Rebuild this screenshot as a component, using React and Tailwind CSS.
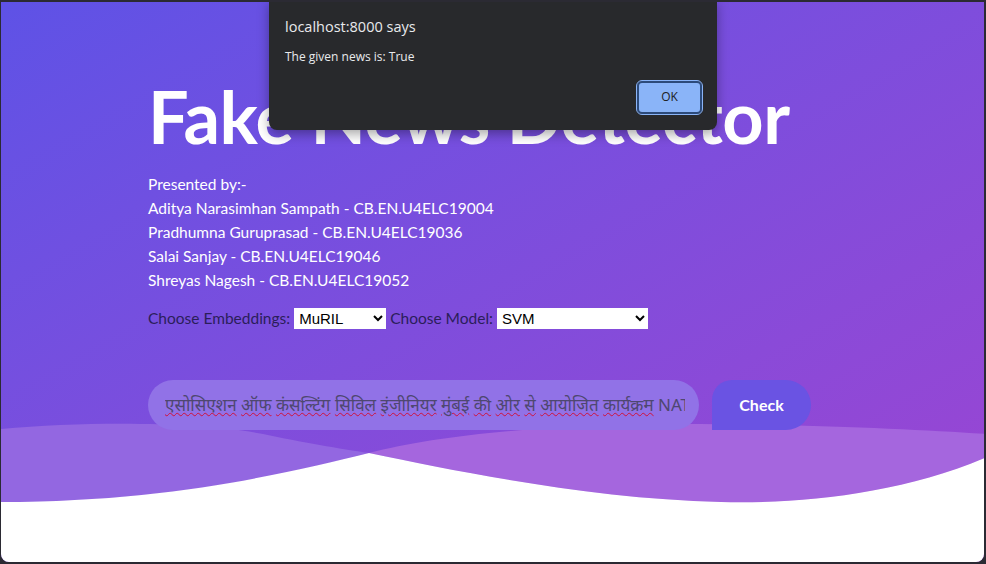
import React from "react";

const hindiWords = ["एसोसिएशन", "ऑफ", "कंसल्टिंग", "सिविल", "इंजीनियर", "मुंबई", "की", "ओर", "से", "आयोजित", "कार्यक्रम"];

function Waves() {
  return (
    <svg className="absolute inset-0" width="984" height="562" viewBox="0 0 984 562" aria-hidden="true">
      <path d="M0,427 C90,419 200,420 262,432 C300,440 340,447 368,451 C300,468 180,500 0,500 Z" fill="#9367e1" />
      <path d="M368,451 C440,432 560,421 700,422 C830,423 920,428 986,432 L986,455 C900,492 800,502 720,500 C590,497 460,470 368,451 Z" fill="#a566de" />
      <path d="M0,500 C170,500 290,470 368,451 C460,470 590,497 720,500 C800,502 900,492 986,455 L986,564 L0,564 Z" fill="#ffffff" />
    </svg>
  );
}

export default function App() {
  const people = [
    "Aditya Narasimhan Sampath - CB.EN.U4ELC19004",
    "Pradhumna Guruprasad - CB.EN.U4ELC19036",
    "Salai Sanjay - CB.EN.U4ELC19046",
    "Shreyas Nagesh - CB.EN.U4ELC19052",
  ];
  return (
    <div className="w-[986px] h-[564px] bg-[#2b2a33] pt-[2px] pl-[1px] pr-[2px] pb-[2px]">
      <div className="relative h-full w-full overflow-hidden rounded-b-[8px] bg-linear-to-br from-[#5e52e6] to-[#9b44d2]">
        <Waves />
        <div className="relative flex flex-col pl-[147px] pt-[74px] font-['Lato',sans-serif]">
          <h1 className="text-[72px] leading-[80px] font-bold text-white tracking-[-0.5px]">Fake News Detector</h1>
          <div className="mt-[16px] flex flex-col text-[15.5px] leading-[24px] text-white">
            <p>Presented by:-</p>
            {people.map((p) => (
              <p key={p}>{p}</p>
            ))}
          </div>
          <div className="mt-[15px] flex items-center gap-[4px] text-[15.5px] text-[#2b1e5a]">
            <span>Choose Embeddings:</span>
            <select className="h-[21px] w-[92px] bg-white text-black text-[15px] font-['Liberation_Sans',sans-serif] px-[1px]" defaultValue="MuRIL">
              <option>MuRIL</option>
            </select>
            <span>Choose Model:</span>
            <select className="h-[21px] w-[151px] bg-white text-black text-[15px] font-['Liberation_Sans',sans-serif] px-[1px]" defaultValue="SVM">
              <option>SVM</option>
            </select>
          </div>
          <div className="mt-[50px] flex items-center gap-[13px]">
            <div className="flex h-[50px] w-[551px] items-center overflow-hidden whitespace-nowrap rounded-full bg-[#9172e7] pl-[17px] pr-[14px] text-[17px] text-[#4e4770] font-['Noto_Sans','Liberation_Sans',sans-serif]">
              <span className="overflow-hidden leading-[24px]">
                {hindiWords.map((w, i) => (
                  <span key={i}>
                    <span className="underline decoration-wavy decoration-[#d0103a] decoration-1 underline-offset-[1px]">{w}</span>{" "}
                  </span>
                ))}
                <span>NATO</span>
              </span>
            </div>
            <button className="h-[50px] w-[99px] rounded-tl-[20px] rounded-r-[25px] bg-[#6a53e3] text-[16px] font-bold text-white">Check</button>
          </div>
        </div>

        <div className="absolute left-[268px] top-[-2px] h-[130px] w-[448px] rounded-b-[8px] bg-[#28292c] shadow-[0_4px_12px_rgba(0,0,0,0.35)] font-['Open_Sans',sans-serif]">
          <div className="pl-[16px] pt-[16px] text-[14.5px] text-[#e8eaed]">localhost:8000 says</div>
          <div className="pl-[16px] pt-[10px] text-[12px] text-[#e8eaed]">The given news is: True</div>
          <div className="flex justify-end pr-[15px] pt-[15px]">
            <button className="h-[33px] w-[65px] rounded-[5px] border-2 border-[#2c4a7a] bg-[#8ab4f8] text-[12px] text-[#202124] outline outline-1 outline-[#8ab4f8]">OK</button>
          </div>
        </div>
      </div>
    </div>
  );
}
